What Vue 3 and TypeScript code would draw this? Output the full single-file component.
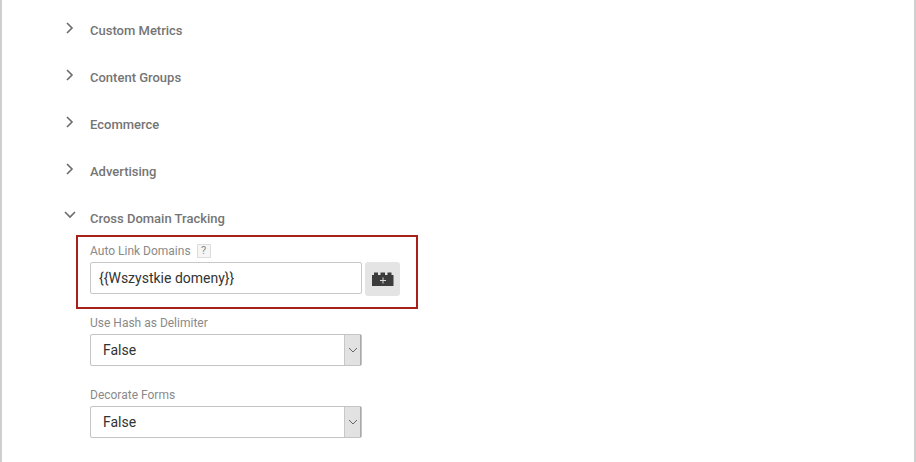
<script setup lang="ts">
const collapsed: string[] = ['Custom Metrics', 'Content Groups', 'Ecommerce', 'Advertising']
const selects: string[] = ['Use Hash as Delimiter', 'Decorate Forms']
const domainValue: string = String.fromCharCode(123, 123) + 'Wszystkie domeny' + String.fromCharCode(125, 125)
</script>

<template>
  <div class="page">
    <div class="sections">
      <div v-for="name in collapsed" :key="name" class="head">
        <svg class="chev" width="10" height="12" viewBox="0 0 10 12"><path d="M2 1l5 5-5 5" fill="none" stroke="#6b6b6b" stroke-width="1.6" /></svg>
        <span>{{ name }}</span>
      </div>
      <div class="head">
        <svg class="chev chev-open" width="12" height="10" viewBox="0 0 12 10"><path d="M1 2l5 5 5-5" fill="none" stroke="#6b6b6b" stroke-width="1.6" /></svg>
        <span>Cross Domain Tracking</span>
      </div>
    </div>
    <div class="highlight">
      <div class="label-row">
        <span class="label">Auto Link Domains</span>
        <span class="help">?</span>
      </div>
      <div class="input-row">
        <div class="input">{{ domainValue }}</div>
        <div class="var-btn">
          <svg width="22" height="14" viewBox="0 0 22 14">
            <path d="M0 3h2V0.500h4V3h2.500V0.500h4.500V3h2.500V0.500h4V3h2v11H0z" fill="#3c3c3c" />
            <path d="M11 5.500v6M8 8.500h6" stroke="#d8d8d8" stroke-width="1" fill="none" />
          </svg>
        </div>
      </div>
    </div>
    <div v-for="s in selects" :key="s" class="field">
      <div class="label">{{ s }}</div>
      <div class="select">
        <span class="value">False</span>
        <span class="arrow">
          <svg width="10" height="6" viewBox="0 0 10 6"><path d="M1 1l4 4 4-4" fill="none" stroke="#666" stroke-width="1" /></svg>
        </span>
      </div>
    </div>
  </div>
</template>

<style>
html, body { margin: 0; background: #fff; }
</style>

<style scoped>
.page {
  box-sizing: border-box;
  width: 916px;
  height: 462px;
  overflow: hidden;
  background: #fff;
  border-left: 2px solid #cfcfcf;
  border-right: 2px solid #cfcfcf;
  padding-left: 88px;
  font-family: Roboto, "Liberation Sans", sans-serif;
}
.sections { display: flex; flex-direction: column; padding-top: 22px; gap: 30px; }
.head {
  position: relative;
  height: 17px;
  line-height: 17px;
  font-size: 13px;
  font-weight: 500;
  color: #757575;
}
.chev { position: absolute; left: -25px; top: 0; }
.chev-open { left: -26px; top: 0; }
.highlight {
  box-sizing: border-box;
  width: 342px;
  height: 74px;
  margin: 8px 0 0 -14px;
  padding: 6px 0 0 12px;
  border: 2px solid #a8201a;
}
.label-row { display: flex; align-items: center; gap: 6px; height: 15px; }
.label { display: block; height: 15px; font-size: 12px; line-height: 17px; color: #8a8a8a; }
.help {
  box-sizing: border-box;
  width: 14px;
  height: 14px;
  border: 1px solid #ddd;
  background: #f6f6f6;
  color: #888;
  font-size: 11px;
  line-height: 12px;
  text-align: center;
}
.input-row { display: flex; align-items: flex-start; gap: 3px; margin-top: 4px; }
.input {
  box-sizing: border-box;
  width: 272px;
  height: 32px;
  border: 1px solid #c8c8c8;
  border-radius: 2px;
  padding-left: 8px;
  font-size: 14px;
  line-height: 30px;
  color: #333;
}
.var-btn {
  width: 35px;
  height: 34px;
  border-radius: 3px;
  background: #e4e4e4;
  display: flex;
  align-items: center;
  justify-content: center;
}
.field { margin-top: 21px; width: 272px; }
.field .label { margin-bottom: 4px; }
.highlight + .field { margin-top: 6px; }
.select {
  box-sizing: border-box;
  width: 272px;
  height: 32px;
  display: flex;
  justify-content: space-between;
  border: 1px solid #c4c4c4;
  border-radius: 2px;
}
.value { padding-left: 12px; font-size: 14px; line-height: 30px; color: #333; }
.arrow {
  box-sizing: border-box;
  width: 17px;
  background: #e2e2e2;
  border-left: 1px solid #c8c8c8;
  border-right: 1px solid #aaa;
  display: flex;
  align-items: center;
  justify-content: center;
}
</style>
